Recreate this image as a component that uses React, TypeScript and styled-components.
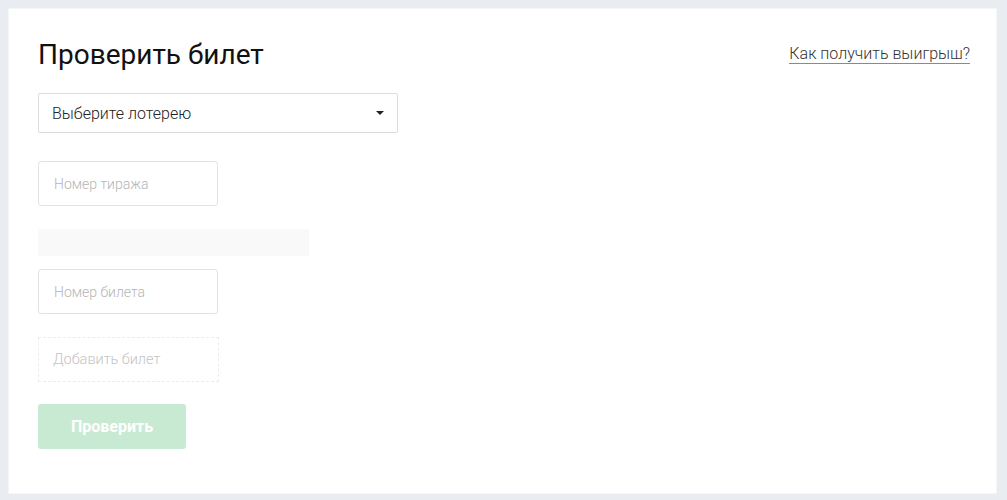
import * as React from 'react';
import styled, {createGlobalStyle} from 'styled-components';

const GlobalStyle = createGlobalStyle`
  html, body {
    margin: 0;
    padding: 0;
    background: #e9edf1;
  }
  body {
    font-family: 'Roboto', 'Liberation Sans', sans-serif;
  }
`;

const App = () => {
  return (
    <Page>
      <GlobalStyle/>
      <Card>
        <Header>
          <Title>Проверить билет</Title>
          <HelpLink href='#'>Как получить выигрыш?</HelpLink>
        </Header>
        <Select>
          <SelectText>Выберите лотерею</SelectText>
          <Caret/>
        </Select>
        <Field placeholder='Номер тиража' gap={28}/>
        <Skeleton/>
        <Field placeholder='Номер билета' gap={13}/>
        <AddTicket>Добавить билет</AddTicket>
        <SubmitButton disabled>Проверить</SubmitButton>
      </Card>
    </Page>
  );
};

const Page = styled.div`
  padding: 9px 11px 7px 9px;
  min-height: 500px;
  box-sizing: border-box;
`;

const Card = styled.div`
  background: #ffffff;
  box-shadow: 0 0 0 1px #f3f5f7;
  height: 484px;
  box-sizing: border-box;
  padding: 30px 26px 0 29px;
  display: flex;
  flex-direction: column;
  align-items: flex-start;
`;

const Header = styled.div`
  width: 100%;
  display: flex;
  justify-content: space-between;
  align-items: baseline;
`;

const Title = styled.h1`
  margin: 0;
  font-size: 28px;
  font-weight: 400;
  color: #111111;
  line-height: 32px;
`;

const HelpLink = styled.a`
  font-size: 16px;
  font-weight: 300;
  color: #333333;
  text-decoration: none;
  border-bottom: 1px solid #8a8a8a;
  line-height: 19px;
  position: relative;
  top: -5px;
`;

const Select = styled.div`
  margin-top: 22px;
  width: 360px;
  height: 40px;
  box-sizing: border-box;
  border: 1px solid #dcdcdc;
  border-radius: 2px;
  display: flex;
  align-items: center;
  justify-content: space-between;
  padding: 0 13px 0 13px;
`;

const SelectText = styled.span`
  font-size: 16px;
  font-weight: 300;
  color: #222222;
`;

const Caret = styled.span`
  width: 0;
  height: 0;
  border-left: 4px solid transparent;
  border-right: 4px solid transparent;
  border-top: 4px solid #222222;
`;

const Field = styled.input<{gap: number}>`
  margin-top: ${(props) => props.gap}px;
  width: 180px;
  height: 45px;
  box-sizing: border-box;
  border: 1px solid #e3e3e3;
  border-radius: 3px;
  padding: 0 15px;
  font-family: 'Roboto', 'Liberation Sans', sans-serif;
  font-size: 14px;
  font-weight: 300;
  color: #333333;
  outline: none;
  &::placeholder {
    color: #b5b5b5;
  }
`;

const Skeleton = styled.div`
  margin-top: 23px;
  width: 271px;
  height: 27px;
  background: #f9f9f9;
`;

const AddTicket = styled.div`
  margin-top: 23px;
  width: 181px;
  height: 45px;
  box-sizing: border-box;
  border: 1px dashed #ececec;
  display: flex;
  align-items: center;
  padding-left: 14px;
  font-size: 14.5px;
  font-weight: 300;
  color: #c4c4c4;
`;

const SubmitButton = styled.button`
  margin-top: 22px;
  width: 148px;
  height: 45px;
  border: 0;
  border-radius: 3px;
  background: #c8ead3;
  color: #ffffff;
  font-family: 'Roboto', 'Liberation Sans', sans-serif;
  font-weight: 700;
  font-size: 16px;
`;

export default App;
